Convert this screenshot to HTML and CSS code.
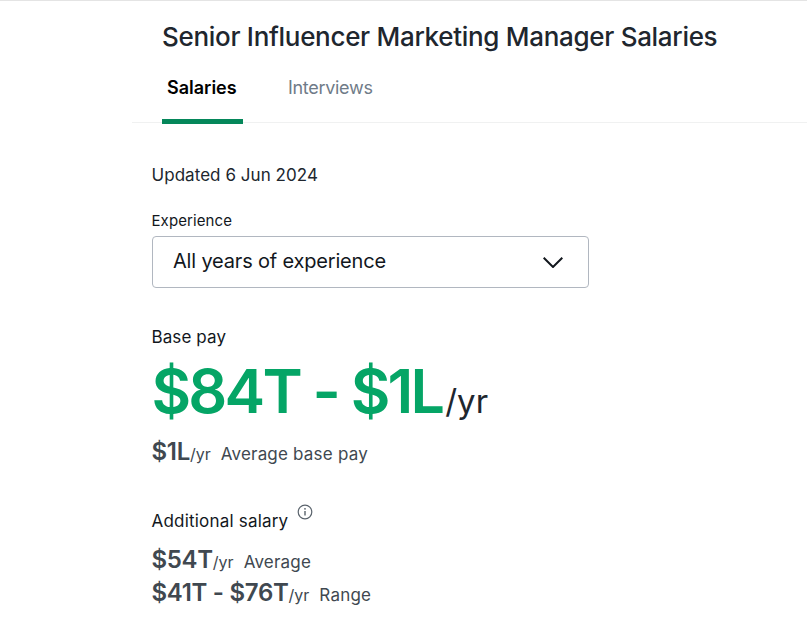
FILE: index.html
```html
<!DOCTYPE html>
<html lang="en">
<head>
<meta charset="utf-8">
<title>Salaries</title>
<link rel="stylesheet" href="styles.css">
</head>
<body>
<div class="top-line"></div>
<main class="page">
  <header class="head">
    <h1 class="title">Senior Influencer Marketing Manager Salaries</h1>
    <nav class="tabs">
      <span class="tab tab-active">Salaries</span>
      <span class="tab tab-idle">Interviews</span>
    </nav>
  </header>
  <section class="content">
    <p class="updated">Updated 6 Jun 2024</p>
    <label class="field-label">Experience</label>
    <div class="select">
      <span class="select-text">All years of experience</span>
      <svg class="chevron" width="20" height="11" viewBox="0 0 20 11" fill="none"><path d="M.7.7 10 10 19.3.7" stroke="#12171d" stroke-width="2"/></svg>
    </div>
    <p class="base-label">Base pay</p>
    <p class="big"><strong>$84T - $1L</strong><span>/yr</span></p>
    <p class="line avg"><strong>$1L</strong><small>/yr</small><span class="note">Average base pay</span></p>
    <p class="add-label">Additional salary<svg class="info" width="16" height="16" viewBox="0 0 16 16" fill="none"><circle cx="8" cy="8" r="6.8" stroke="#5a636c" stroke-width="1.2"/><path d="M8 7v4.5" stroke="#5a636c" stroke-width="1.4"/><circle cx="8" cy="4.8" r=".9" fill="#5a636c"/></svg></p>
    <p class="line l1"><strong>$54T</strong><small>/yr</small><span class="note">Average</span></p>
    <p class="line l2"><strong>$41T - $76T</strong><small>/yr</small><span class="note">Range</span></p>
  </section>
</main>
</body>
</html>
```
FILE: styles.css
```css
* { box-sizing: border-box; }
html, body { margin: 0; padding: 0; background: #fff; }
body { font-family: Inter, "Liberation Sans", sans-serif; color: #20262e; width: 807px; height: 632px; overflow: hidden; }
.top-line { height: 1px; background: #e4e4e4; }
.page { margin-left: 132px; }
.head { border-bottom: 1px solid #f0f1f1; height: 122px; padding-left: 30px; }
.title { margin: 0; padding-top: 19px; font-size: 26px; line-height: 34px; font-weight: 500; letter-spacing: -0.3px; }
.tabs { display: flex; margin-top: 22px; }
.tab { font-size: 18px; line-height: 24px; padding: 0 5px 19px; }
.tab-active { color: #000; font-weight: 600; border-bottom: 5px solid #05875a; margin-right: 40px; width: 81px; white-space: nowrap; }
.tab-idle { color: #6f7b88; letter-spacing: -0.3px; }
.content { padding-left: 19.5px; }
.updated { margin: 40px 0 0; font-size: 17px; line-height: 24px; letter-spacing: 0.05px; }
.field-label { display: block; margin-top: 24px; font-size: 15px; line-height: 20px; letter-spacing: 0.1px; color: #12171d; }
.select { margin-top: 5px; margin-left: 0.5px; width: 437px; height: 52px; border: 1px solid #b1b7c0; border-radius: 4px; display: flex; align-items: center; justify-content: space-between; padding: 0 25px 0 20px; font-size: 20px; letter-spacing: -0.18px; color: #12171d; }
.select-text { margin-bottom: 2px; }
.base-label { margin: 37px 0 0; font-size: 17px; line-height: 24px; letter-spacing: 0.1px; color: #12171d; }
.big { margin: 10px 0 0; height: 64px; line-height: 64px; color: #20262e; white-space: nowrap; }
.big strong { font-size: 61px; font-weight: 600; color: #05a566; letter-spacing: -2.8px; }
.big span { font-size: 33px; margin-left: 3px; }
.line { margin: 0; font-size: 17px; line-height: 32px; color: #404850; }
.line strong { font-size: 24px; font-weight: 600; letter-spacing: -0.3px; }
.line small { font-size: 16px; }
.note { margin-left: 10px; letter-spacing: 0.2px; }
.avg { margin-top: 13px; }
.add-label { margin: 39px 0 0; font-size: 17px; line-height: 24px; letter-spacing: 0.2px; color: #12171d; }
.info { vertical-align: 7px; margin-left: 9px; margin-top: -8px; }
.l1 { margin-top: 11px; }
.l2 { margin-top: -1px; }
```
